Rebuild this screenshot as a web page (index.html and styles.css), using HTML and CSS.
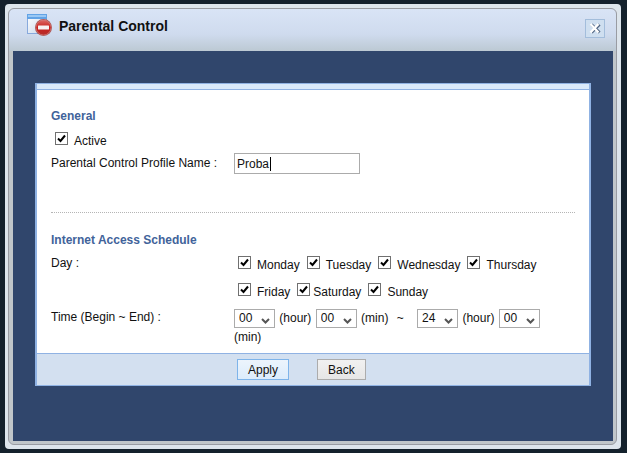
FILE: index.html
```html
<!DOCTYPE html>
<html lang="en">
<head>
    <meta charset="UTF-8">
    <meta name="viewport" content="width=device-width, initial-scale=1.0">
    <title>Parental Control</title>
    <link rel="stylesheet" href="styles.css">
</head>
<body>

<div class="dialog">
    <div class="frame">
        <header class="titlebar">
            <svg class="title-icon" width="26" height="24" viewBox="0 0 26 24" aria-hidden="true">
                <defs>
                    <linearGradient id="page" x1="0" y1="0" x2="1" y2="1">
                        <stop offset="0" stop-color="#ffffff"/>
                        <stop offset="1" stop-color="#c5d5ea"/>
                    </linearGradient>
                    <linearGradient id="red" x1="0" y1="0" x2="0" y2="1">
                        <stop offset="0" stop-color="#dc6a66"/>
                        <stop offset="0.5" stop-color="#c8211d"/>
                        <stop offset="1" stop-color="#b52d2b"/>
                    </linearGradient>
                </defs>
                <rect x="0.5" y="0.5" width="19" height="19" fill="url(#page)" stroke="#88a9dc"/>
                <rect x="0" y="0" width="20" height="5" fill="#62a3e6"/>
                <rect x="1" y="1" width="18" height="2" fill="#9ac8f4"/>
                <circle cx="16.5" cy="13.5" r="8.5" fill="#a8504f"/>
                <circle cx="16.5" cy="13.5" r="7.5" fill="url(#red)" stroke="#d98783" stroke-width="0.6"/>
                <rect x="11" y="11.5" width="11" height="4" rx="0.5" fill="#f7f1f2"/>
            </svg>
            <h1>Parental Control</h1>
            <button type="button" class="close" aria-label="Close">
                <svg width="12" height="11" viewBox="0 0 12 11" aria-hidden="true">
                    <path d="M2.5 1.5L10.5 9.5M10.5 1.5L2.5 9.5" stroke="#4d6280" stroke-width="3"/>
                    <path d="M1.5 1L9.5 9.5M9.5 1L1.5 9.5" stroke="#ffffff" stroke-width="2.4"/>
                </svg>
            </button>
        </header>

        <main class="content">
            <form class="panel">
                <div class="fields">
                    <section class="general">
                        <h2>General</h2>
                        <label class="check active"><input type="checkbox" checked><span>Active</span></label>
                        <div class="row name-row">
                            <label for="profileName">Parental Control Profile Name :</label>
                            <div class="name-field">
                                <input type="text" id="profileName" value="Proba">
                                <span class="caret"></span>
                            </div>
                        </div>
                    </section>

                    <section class="schedule">
                        <h2>Internet Access Schedule</h2>
                        <div class="row day-row">
                            <span>Day :</span>
                            <div class="days">
                                <div class="day-line">
                                    <label class="check"><input type="checkbox" checked><span>Monday</span></label>
                                    <label class="check"><input type="checkbox" checked><span>Tuesday</span></label>
                                    <label class="check"><input type="checkbox" checked><span>Wednesday</span></label>
                                    <label class="check"><input type="checkbox" checked><span>Thursday</span></label>
                                </div>
                                <div class="day-line">
                                    <label class="check"><input type="checkbox" checked><span>Friday</span></label>
                                    <label class="check tight"><input type="checkbox" checked><span>Saturday</span></label>
                                    <label class="check"><input type="checkbox" checked><span>Sunday</span></label>
                                </div>
                            </div>
                        </div>
                        <div class="row time-row">
                            <span>Time (Begin ~ End) :</span>
                            <div class="times">
                                <select id="beginHour"><option>00</option></select>
                                <label for="beginHour">(hour)</label>
                                <select id="beginMin"><option>00</option></select>
                                <label for="beginMin">(min)</label>
                                <span class="to">~</span>
                                <select id="endHour"><option>24</option></select>
                                <label for="endHour">(hour)</label>
                                <select id="endMin"><option>00</option></select>
                                <label for="endMin">(min)</label>
                            </div>
                        </div>
                    </section>
                </div>

                <footer class="actions">
                    <button type="button" class="btn primary">Apply</button>
                    <button type="button" class="btn">Back</button>
                </footer>
            </form>
        </main>
    </div>
</div>

</body>
</html>
```

FILE: styles.css
```css
* {
    box-sizing: border-box;
}

body {
    margin: 0;
    min-height: 100vh;
    padding: 4px 6px 4px 5px;
    display: flex;
    background: #14212c;
    color: #111;
    font: 12px/16px "Liberation Sans", Arial, sans-serif;
}

.dialog {
    flex: 1;
    display: flex;
    padding: 4px 4px 4px 3px;
    background: #dde5ec;
    border-radius: 4px;
}

.frame {
    flex: 1;
    display: flex;
    flex-direction: column;
    padding: 0 3px 3px 4px;
    border: 1px solid #999ca3;
    border-radius: 6px;
    background: #c0c6ca linear-gradient(#d9e4f6, #cfdbee 60%, #bcc9d3) no-repeat 0 0 / 100% 42px;
}

.titlebar {
    display: flex;
    align-items: center;
    height: 42px;
    padding: 0 8px 6px 14px;
}

.title-icon {
    margin-bottom: 2px;
}

h1 {
    margin: 0 auto 2px 6px;
    font-size: 14px;
    line-height: 16px;
}

.close {
    display: flex;
    align-items: center;
    justify-content: center;
    width: 20px;
    height: 19px;
    margin-top: 2px;
    padding: 0;
    border: 1px solid #a3bddb;
    background: #cfdff0;
}

.close svg {
    flex: none;
}

.content {
    flex: 1;
    padding: 32px 22px;
    background: #30466c;
}

.panel {
    border: 1px solid #8fb2e3;
    border-width: 1px 2px;
    background: #fff;
}

.panel::before {
    content: "";
    display: block;
    height: 5px;
    border-bottom: 1px solid #8fb2e3;
    background: #d9e9fa;
}

.fields {
    padding: 17px 14px 6px;
}

h2 {
    margin: 0;
    font-size: 12px;
    line-height: 18px;
    color: #41639a;
}

.general {
    padding-bottom: 38px;
    border-bottom: 1px dotted #b5b5b5;
}

.schedule {
    padding-top: 18px;
}

.row {
    display: grid;
    grid-template-columns: 183px 1fr;
}

.check {
    display: flex;
    gap: 6px;
}

.check span {
    padding-top: 1px;
}

.active {
    padding: 7px 4px 4px;
}

.name-row > label {
    padding-top: 2px;
}

.tight {
    gap: 3px;
}

input[type="checkbox"] {
    appearance: none;
    flex: none;
    width: 13px;
    height: 13px;
    margin: 0;
    border: 1px solid #707070;
    background: #fff;
}

input[type="checkbox"]:checked {
    background: #fff url("data:image/svg+xml,%3Csvg xmlns='http://www.w3.org/2000/svg' viewBox='0 0 11 11'%3E%3Cpath d='M2 5.5L4.5 8L9 2.5' fill='none' stroke='%23000' stroke-width='2'/%3E%3C/svg%3E");
}

.name-field {
    position: relative;
    width: 126px;
}

input[type="text"] {
    display: block;
    width: 100%;
    height: 21px;
    padding: 0 2px;
    border: 1px solid #ababab;
    color: #111;
    font: inherit;
}

.caret {
    position: absolute;
    top: 4px;
    left: 36px;
    width: 1px;
    height: 14px;
    background: #000;
}

.day-row {
    padding-top: 6px;
}

.days {
    display: grid;
    gap: 10px;
    padding: 1px 0 0 4px;
}

.day-line {
    display: flex;
    gap: 7px;
}

.time-row {
    padding-top: 9px;
}

.times {
    padding-right: 14px;
    line-height: 19px;
}

select {
    appearance: none;
    width: 41px;
    height: 19px;
    margin-right: 1px;
    padding: 0 4px;
    border: 1px solid #ababab;
    border-radius: 0;
    background: #fff url("data:image/svg+xml,%3Csvg xmlns='http://www.w3.org/2000/svg' viewBox='0 0 9 6'%3E%3Cpath d='M1 1L4.5 4.5L8 1' fill='none' stroke='%23555' stroke-width='2'/%3E%3C/svg%3E") no-repeat right 4px top 8px / 9px 6px;
    color: #111;
    font: inherit;
    line-height: 17px;
    vertical-align: middle;
}

.times label {
    margin-right: 1px;
}

.to {
    margin: 0 10px 0 4px;
}

.actions {
    display: flex;
    gap: 28px;
    padding: 5px 200px;
    border-top: 1px solid #8fb2e3;
    background: #d3e0f0;
}

.btn {
    height: 21px;
    padding: 0 10px;
    border: 1px solid #acacac;
    background: linear-gradient(#f1f1f1, #e6e6e6);
    color: #111;
    font: inherit;
}

.primary {
    border-color: #7eb4ea;
    background: linear-gradient(#ecf4fc, #dcecfc);
}
```
